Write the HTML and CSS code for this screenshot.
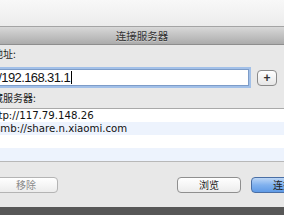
FILE: index.html
```html
<!DOCTYPE html>
<html>
<head>
<meta charset="utf-8">
<link rel="stylesheet" href="styles.css">
</head>
<body>
<div class="screen">
  <div class="top"></div>
  <div class="titlebar"><span class="title">连接服务器</span></div>
  <div class="content">
    <div class="label label-addr">服务器地址:</div>
    <div class="addr-row">
      <div class="field"><span class="field-text">afp://192.168.31.1</span><span class="caret"></span></div>
      <div class="plus-btn">+</div>
    </div>
    <div class="label label-fav">个人收藏服务器:</div>
    <div class="list">
      <div class="row">ftp://117.79.148.26</div>
      <div class="row alt">smb://share.n.xiaomi.com</div>
      <div class="row"></div>
      <div class="row alt"></div>
    </div>
    <div class="buttons">
      <div class="btn btn-remove">移除</div>
      <div class="btn btn-browse">浏览</div>
      <div class="btn btn-primary">连接</div>
    </div>
  </div>
  <div class="dock"></div>
</div>
</body>
</html>
```

FILE: styles.css
```css
html, body {
  margin: 0;
  padding: 0;
}
body {
  width: 284px;
  height: 215px;
  overflow: hidden;
  font-family: "DejaVu Sans", "Noto Sans CJK SC", sans-serif;
}
.screen {
  width: 284px;
  height: 215px;
  display: flex;
  flex-direction: column;
  overflow: hidden;
}
.top {
  height: 26px;
  background: linear-gradient(#f8f8f8, #ececec);
  flex: none;
}
.titlebar {
  flex: none;
  height: 17px;
  border-top: 1px solid #a4a4a4;
  border-bottom: 1px solid #8e8e8e;
  background: linear-gradient(#d8d8d8, #c2c2c2 50%, #acacac);
  display: flex;
  align-items: center;
  justify-content: center;
}
.title {
  font-family: "Noto Sans CJK SC", sans-serif;
  font-size: 10.5px;
  color: #333;
  text-shadow: 0 1px 0 rgba(255,255,255,0.35);
}
.content {
  flex: 1;
  background: #e8e8e8;
  display: flex;
  flex-direction: column;
  overflow: hidden;
}
.label {
  font-family: "Noto Sans CJK SC", sans-serif;
  font-size: 10px;
  line-height: 12px;
  height: 12px;
  color: #222;
  white-space: nowrap;
  flex: none;
}
.label-addr {
  margin-top: 3px;
  margin-left: -37px;
}
.addr-row {
  display: flex;
  align-items: center;
  margin-top: 9px;
  margin-left: -28px;
  flex: none;
}
.field {
  width: 275px;
  height: 15px;
  background: #fff;
  border: 1px solid #7d9cc8;
  box-shadow: 0 0 0 2px #a2c0e8;
  display: flex;
  align-items: center;
  flex: none;
}
.field-text {
  font-family: "Liberation Sans", sans-serif;
  font-size: 13px;
  color: #111;
  white-space: nowrap;
  padding-left: 3px;
  letter-spacing: -0.6px;
}
.caret {
  width: 1px;
  height: 13px;
  background: #000;
  margin-left: 1px;
}
.plus-btn {
  flex: none;
  width: 18px;
  height: 14px;
  margin-left: 8px;
  border: 1px solid #8a8a8a;
  border-radius: 4px;
  background: linear-gradient(#ffffff, #e6e6e6);
  font-family: "Liberation Sans", sans-serif;
  font-size: 12px;
  font-weight: bold;
  line-height: 14px;
  text-align: center;
  color: #333;
}
.label-fav {
  margin-top: 6px;
  margin-left: -37px;
}
.list {
  flex: none;
  margin-top: 4px;
  border-top: 1px solid #a9a9a9;
  border-bottom: 1px solid #b8b8b8;
  background: #fff;
}
.row {
  height: 13px;
  line-height: 14px;
  font-size: 10.2px;
  color: #111;
  white-space: nowrap;
  margin-left: -5px;
}
.row.alt {
  background: #edf3fd;
}
.buttons {
  flex: none;
  display: flex;
  align-items: center;
  margin-top: 15px;
  margin-left: -6px;
}
.btn {
  flex: none;
  height: 14px;
  border: 1px solid #8f8f8f;
  border-radius: 4px;
  background: linear-gradient(#ffffff, #ececec);
  font-family: "Noto Sans CJK SC", sans-serif;
  font-size: 10px;
  line-height: 14px;
  text-align: center;
  color: #222;
}
.btn-remove {
  width: 62px;
  color: #8a8a8a;
  border-color: #b4b4b4;
}
.btn-browse {
  width: 62px;
  margin-left: 119px;
}
.btn-primary {
  width: 42px;
  margin-left: 10px;
  border-color: #4a6fa5;
  background: linear-gradient(#bcd6f6, #80b1ee 50%, #5f9ae6);
  text-align: left;
  padding-left: 21px;
}
.dock {
  flex: none;
  height: 8px;
  background: #575757;
}
```
